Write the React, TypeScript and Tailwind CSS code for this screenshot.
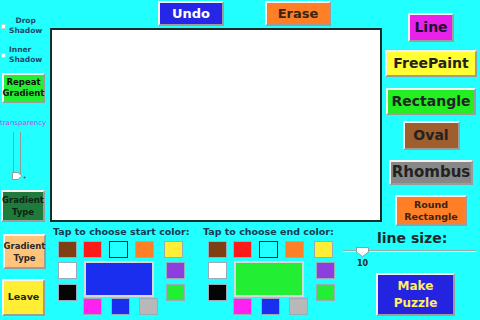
import React from "react";

const bevel =
  "border-2 border-t-[#f4f4f4] border-l-[#f4f4f4] border-b-[#9c9c9c] border-r-[#9c9c9c]";
const font = "font-['DejaVu_Sans',sans-serif]";

function Swatch({ c, extra = "" }: { c: string; extra?: string }) {
  return (
    <div
      className={`w-[19px] h-[17px] shrink-0 border border-[#9ab] ${extra}`}
      style={{ backgroundColor: c }}
    />
  );
}

function Palette({ label, big, width }: { label: string; big: string; width: string }) {
  return (
    <div className={`${width} shrink-0 flex flex-col`}>
      <div className={`pl-[3px] h-[11px] leading-[11px] text-[9.5px] font-bold text-[#163a52] whitespace-nowrap ${font}`}>
        {label}
      </div>
      <div className="ml-[8px] mt-[4px] flex">
        <div className="flex flex-col">
          <Swatch c="#7e3f12" />
          <Swatch c="#ffffff" extra="mt-[4px]" />
          <Swatch c="#050505" extra="mt-[5px]" />
        </div>
        <div className="ml-[6px] flex flex-col">
          <div className="flex gap-[7px]">
            <Swatch c="#ff1a1a" />
            <Swatch c="#22ffff" extra="!border-[#222]" />
            <Swatch c="#ff7f27" />
          </div>
          <div
            className="mt-[3px] ml-[1px] w-[70px] h-[36px] border-2 border-[#d8d8d8]"
            style={{ backgroundColor: big }}
          />
          <div className="mt-[1px] flex gap-[9px]">
            <Swatch c="#ff22ee" />
            <Swatch c="#1a2ef0" />
            <Swatch c="#b8b8b8" />
          </div>
        </div>
        <div className="ml-[6px] flex flex-col">
          <Swatch c="#ffee33" />
          <Swatch c="#8c3fdc" extra="mt-[4px] ml-[2px]" />
          <Swatch c="#22ee33" extra="mt-[5px] ml-[2px]" />
        </div>
      </div>
    </div>
  );
}

export default function App() {
  return (
    <div className={`w-[480px] h-[320px] bg-[#22ffff] flex overflow-hidden ${font}`}>
      {/* Left column */}
      <div className="w-[50px] shrink-0 flex flex-col">
        <div className="mt-[16px] h-[20px] flex items-center">
          <div className="ml-[1px] w-[5px] h-[5px] bg-white border border-[#ccc]" />
          <div className="ml-[3px] text-center text-[7.5px] leading-[10px] font-bold text-[#1d4a6a]">
            Drop
            <br />
            Shadow
          </div>
        </div>
        <div className="mt-[9px] h-[20px] flex items-center">
          <div className="ml-[1px] w-[5px] h-[5px] bg-white border border-[#ccc]" />
          <div className="ml-[3px] text-left text-[7.5px] leading-[10px] font-bold text-[#1d4a6a]">
            Inner
            <br />
            Shadow
          </div>
        </div>
        <div
          className={`mt-[8px] ml-[2px] w-[43px] h-[30px] bg-[#22ee33] ${bevel} flex items-center justify-center text-center text-[8.5px] leading-[11px] font-bold text-[#111]`}
        >
          Repeat
          <br />
          Gradient
        </div>
        <div className="mt-[16px] h-[8px] leading-[8px] text-[7px] text-[#dd33ee] whitespace-nowrap">
          transparency
        </div>
        <div className="mt-[5px] h-[48px] flex">
          <div className="ml-[13px] w-[8px] h-[44px] border-l border-r border-[#8a9a9a]" />
          <svg width="14" height="8" viewBox="0 0 14 8" className="-ml-[9px] mt-[40px]">
            <polygon points="0.5,0.5 6,0.5 10,4 6,7.5 0.5,7.5" fill="#ffffff" stroke="#999" strokeWidth="1" />
            <circle cx="12.5" cy="5.5" r="1" fill="#456" />
          </svg>
        </div>
        <div
          className={`mt-[10px] ml-[1px] w-[44px] h-[32px] bg-[#1e7b3c] ${bevel} flex items-center justify-center text-center text-[8.5px] leading-[12px] font-bold text-[#0c2414]`}
        >
          Gradient
          <br />
          Type
        </div>
        <div
          className={`mt-[12px] ml-[3px] w-[43px] h-[35px] bg-[#ffc47a] ${bevel} flex items-center justify-center text-center text-[8.5px] leading-[12px] font-bold text-[#2a2a2a]`}
        >
          Gradient
          <br />
          Type
        </div>
        <div
          className={`mt-[10px] ml-[2px] w-[43px] h-[37px] bg-[#ffee33] ${bevel} flex items-center justify-center text-[9.5px] font-bold text-[#222]`}
        >
          Leave
        </div>
      </div>

      {/* Main */}
      <div className="w-[430px] shrink-0 flex flex-col">
        <div className="flex">
          {/* Center */}
          <div className="w-[332px] shrink-0 flex flex-col">
            <div className="h-[28px] flex">
              <div
                className={`ml-[108px] mt-[1px] w-[66px] h-[25px] bg-[#2626e8] ${bevel} flex items-center justify-center text-[13px] font-bold text-white`}
              >
                Undo
              </div>
              <div
                className={`ml-[41px] mt-[1px] w-[66px] h-[25px] bg-[#ff7f27] ${bevel} flex items-center justify-center text-[13px] font-bold text-[#3a2412]`}
              >
                Erase
              </div>
            </div>
            <div className="h-[194px] w-[332px] bg-white border-2 border-[#0f2f2f]" />
          </div>
          {/* Right column */}
          <div className="w-[98px] shrink-0 flex flex-col items-center">
            <div
              className={`mt-[13px] w-[46px] h-[29px] bg-[#e822e8] ${bevel} flex items-center justify-center text-[14px] font-bold text-[#1e1030]`}
            >
              Line
            </div>
            <div
              className={`mt-[8px] w-[92px] h-[27px] bg-[#ffff33] ${bevel} flex items-center justify-center text-[14px] font-bold text-[#222]`}
            >
              FreePaint
            </div>
            <div
              className={`mt-[11px] w-[90px] h-[27px] bg-[#22ee22] ${bevel} flex items-center justify-center text-[14px] font-bold text-[#222]`}
            >
              Rectangle
            </div>
            <div
              className={`mt-[6px] w-[57px] h-[29px] bg-[#9e5e2e] ${bevel} flex items-center justify-center text-[14px] font-bold text-[#222]`}
            >
              Oval
            </div>
            <div
              className={`mt-[10px] w-[84px] h-[25px] bg-[#888888] ${bevel} flex items-center justify-center text-[15px] font-bold text-[#222]`}
            >
              Rhombus
            </div>
            <div
              className={`mt-[10px] w-[72px] h-[31px] bg-[#ff7f27] ${bevel} flex items-center justify-center text-center text-[9.5px] leading-[12px] font-bold text-[#3a2412]`}
            >
              Round
              <br />
              Rectangle
            </div>
          </div>
        </div>

        {/* Bottom */}
        <div className="flex">
          <Palette label="Tap to choose start color:" big="#1a2ef0" width="w-[150px]" />
          <Palette label="Tap to choose end color:" big="#22ee33" width="w-[143px]" />
          <div className="w-[137px] shrink-0 flex flex-col">
            <div className="mt-[4px] pl-[34px] text-[14px] leading-[16px] font-bold text-[#1a2a2a] whitespace-nowrap">
              line size:
            </div>
            <div className="mt-[1px] h-[10px] relative">
              <div className="absolute left-0 top-[3px] w-[133px] h-[1px] bg-[#9aa8a8]" />
              <div className="absolute left-0 top-[4px] w-[133px] h-[1px] bg-[#d8e8e8]" />
              <svg width="13" height="10" viewBox="0 0 13 10" className="absolute left-[13px] top-0">
                <polygon points="0.5,0.5 12.5,0.5 12.5,5 6.5,9.5 0.5,5" fill="#ffffff" stroke="#999" strokeWidth="1" />
              </svg>
            </div>
            <div className="mt-[2px] pl-[14px] text-[8px] leading-[9px] font-bold text-[#1a2a2a]">10</div>
            <div
              className={`mt-[5px] ml-[33px] w-[79px] h-[43px] bg-[#2424e0] ${bevel} flex items-center justify-center text-center text-[12px] leading-[17px] font-bold text-[#ffee66]`}
            >
              Make
              <br />
              Puzzle
            </div>
          </div>
        </div>
      </div>
    </div>
  );
}
